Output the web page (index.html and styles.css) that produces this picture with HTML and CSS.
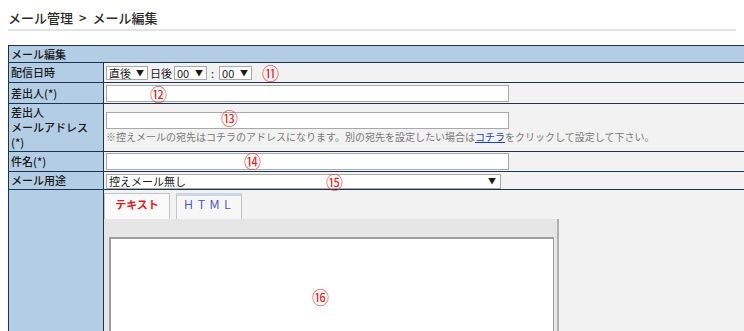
FILE: index.html
```html
<!DOCTYPE html>
<html>
<head>
<meta charset="utf-8">
<title>メール編集</title>
<link rel="stylesheet" href="styles.css">
</head>
<body>
<div class="page">
	<!-- breadcrumb -->
	<h1 class="crumb">メール管理<span class="sep">&gt;</span>メール編集</h1>

	<table class="form">
		<tr class="r-cap"><th colspan="2" class="cap">メール編集</th></tr>
		<tr class="r-date">
			<th>配信日時</th>
			<td>
				<span class="sel s-day">直後<b>▼</b></span><span class="txt">日後</span><span class="sel s-num">00<b>▼</b></span><span class="txt colon">:</span><span class="sel s-num">00<b>▼</b></span>
			</td>
		</tr>
		<tr class="r-from">
			<th>差出人(*)</th>
			<td><input type="text" class="field"></td>
		</tr>
		<tr class="r-addr">
			<th>差出人<br>メールアドレス<br>(*)</th>
			<td>
				<input type="text" class="field">
				<div class="note">※控えメールの宛先はコチラのアドレスになります。別の宛先を設定したい場合は<a href="#">コチラ</a>をクリックして設定して下さい。</div>
			</td>
		</tr>
		<tr class="r-subj">
			<th>件名(*)</th>
			<td><input type="text" class="field"></td>
		</tr>
		<tr class="r-use">
			<th>メール用途</th>
			<td><span class="sel s-use">控えメール無し<b>▼</b></span></td>
		</tr>
		<tr class="r-body">
			<th></th>
			<td>
				<div class="tabs">
					<span class="tab on">テキスト</span>
					<span class="tab html">ＨＴＭＬ</span>
				</div>
				<div class="panel">
					<textarea class="editor"></textarea>
				</div>
			</td>
		</tr>
	</table>

	<!-- annotation numbers over the form -->
	<span class="mark m11">⑪</span>
	<span class="mark m12">⑫</span>
	<span class="mark m13">⑬</span>
	<span class="mark m14">⑭</span>
	<span class="mark m15">⑮</span>
	<span class="mark m16">⑯</span>
</div>
</body>
</html>
```

FILE: styles.css
```css
html, body {
	margin: 0;
	overflow: hidden;
	background-color: #fff;
}
body {
	font-family: "Noto Sans CJK JP", "Noto Sans", sans-serif;
	color: #1a1a1a;
}
.page {
	position: relative;
	padding: 8px;
}

.crumb {
	margin: 0;
	font-size: 13px;
	font-weight: 500;
	line-height: 20px;
	color: #2a2a2a;
	padding-bottom: 1px;
	border-bottom: 2px solid #e2e2e2;
}
.crumb .sep {
	margin: 0 6px;
}

.form {
	margin-top: 14px;
	width: 780px;
	border-collapse: collapse;
	font-size: 11px;
	line-height: 15px;
}
.form th, .form td {
	border: 1px solid #1b3452;
	padding: 0;
}
.form th {
	width: 92px;
	background-color: #b2cde4;
	text-align: left;
	font-weight: 500;
	padding-left: 2px;
	vertical-align: middle;
}
.form td {
	background-color: #f2f2f2;
	padding-left: 2px;
	vertical-align: middle;
}
.form th.cap {
	width: auto;
}

.r-cap { height: 17px; }
.r-date { height: 20px; }
.r-from { height: 21px; }
.r-addr { height: 48px; }
.r-subj { height: 20px; }
.r-use { height: 18px; }
.r-body { height: 160px; }
.r-body td { vertical-align: top; padding: 2px 0 0 0; }

/* select look-alikes */
.sel {
	display: inline-block;
	box-sizing: border-box;
	height: 14px;
	line-height: 12px;
	border: 1px solid #a9a9a9;
	background-color: #fff;
	padding-left: 2px;
	vertical-align: middle;
	font-size: 11px;
}
.sel b {
	float: right;
	font-size: 8px;
	margin-right: 3px;
}
.s-day { width: 42px; }
.s-num { width: 33px; }
.s-use { width: 395px; height: 15px; }
.s-use b { margin-right: 4px; }
.txt {
	display: inline-block;
	vertical-align: middle;
	margin: 0 2px;
}
.colon { margin: 0 5px 0 4px; }

.field {
	display: block;
	box-sizing: border-box;
	width: 403px;
	height: 17px;
	margin: 0;
	border: 1px solid #a9a9a9;
	background-color: #fff;
}
.note {
	margin-top: 1px;
	font-size: 10px;
	line-height: 14px;
	color: #7a7a7a;
}
.note a {
	color: #1a3fc0;
}

/* editor tabs */
.tabs {
	display: flex;
	gap: 6px;
	margin-top: 1px;
}
.tab {
	box-sizing: border-box;
	width: 66px;
	height: 26px;
	border: 1px solid #c4c4c4;
	border-bottom: none;
	background-color: #f6f6f6;
	text-align: center;
	line-height: 20px;
	font-size: 11px;
}
.tab.on {
	color: #e01c1c;
	font-weight: bold;
	background-color: #fafafa;
}
.tab.html {
	color: #3f51c8;
	letter-spacing: 2px;
	border-top: 3px solid #cdd6e4;
	line-height: 16px;
}
.panel {
	box-sizing: border-box;
	width: 455px;
	height: 160px;
	padding: 18px 4px 0 5px;
	background-color: #e6e6e6;
	border-right: 2px solid #b0b0b0;
}
.editor {
	display: block;
	box-sizing: border-box;
	width: 445px;
	height: 140px;
	margin: 0;
	border: 1px solid #a0a0a0;
	border-top-width: 2px;
	border-left-width: 2px;
	background-color: #fff;
	resize: none;
}

/* red circled annotation numbers */
.mark {
	position: absolute;
	font-size: 17px;
	line-height: 16px;
	color: #e02a2a;
}
.m11 { left: 262px; top: 65px; }
.m12 { left: 150px; top: 86px; }
.m13 { left: 221px; top: 110px; }
.m14 { left: 244px; top: 153px; }
.m15 { left: 326px; top: 174px; }
.m16 { left: 312px; top: 289px; }
```
